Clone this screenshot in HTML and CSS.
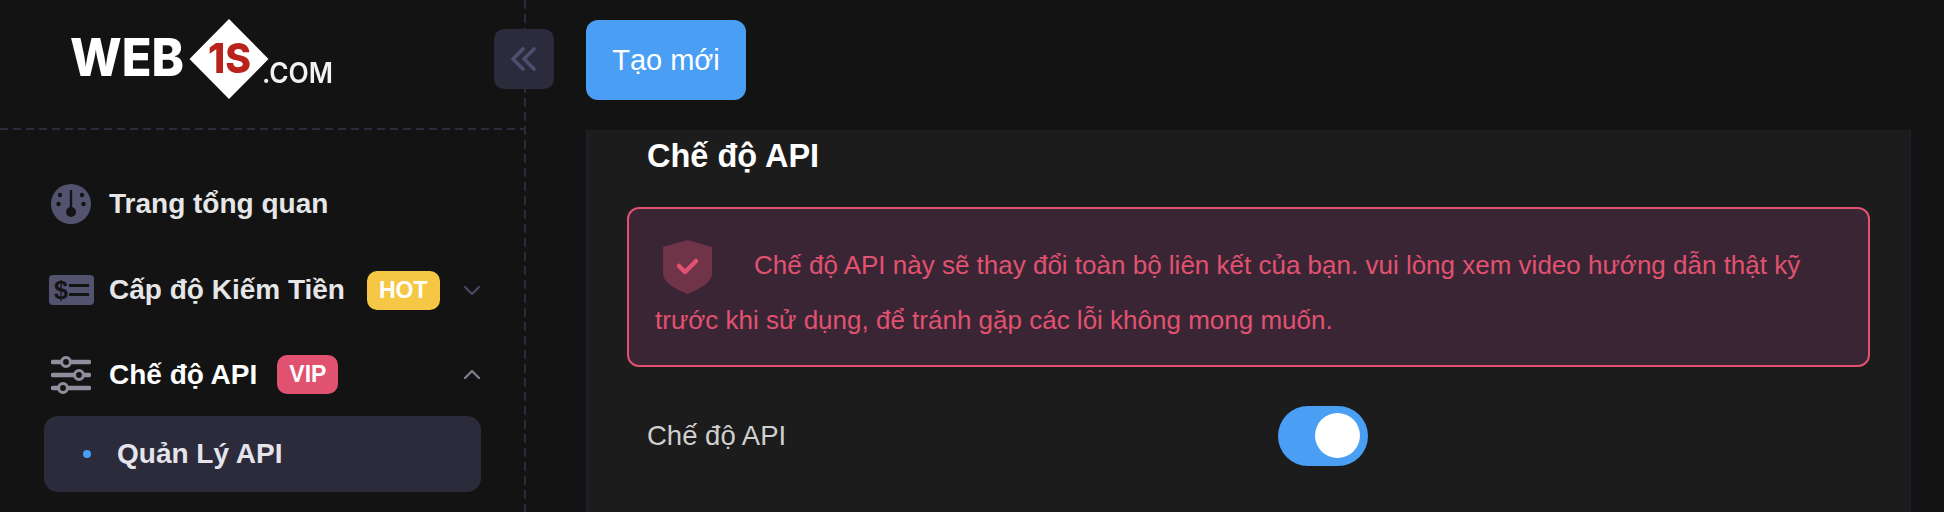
FILE: index.html
```html
<!DOCTYPE html>
<html lang="vi">
<head>
  <meta charset="UTF-8" />
  <title>Chế độ API | Web1s</title>
  <link rel="stylesheet" href="styles.css">
</head>
<body>
  <aside class="sidebar">
    <div class="logo-row">
      <svg class="logo" width="270" height="84" viewBox="0 0 270 84">
        <text class="logo-web" x="0" y="57" textLength="114" lengthAdjust="spacingAndGlyphs">WEB</text>
        <polygon points="159,0 198.5,40 159,80 119.5,40" fill="#fff" />
        <text class="logo-num" x="138" y="54" textLength="43" lengthAdjust="spacingAndGlyphs">1S</text>
        <text class="logo-com" x="192" y="64" textLength="71" lengthAdjust="spacingAndGlyphs">.COM</text>
      </svg>
      <button class="collapse">
        <svg width="28" height="24" viewBox="0 0 28 24" fill="none" stroke="#4e4e70" stroke-width="3.6" stroke-linecap="round" stroke-linejoin="round">
          <path d="M13 2 3 12l10 10" />
          <path d="M24 2 14 12l10 10" />
        </svg>
      </button>
    </div>

    <nav class="menu">
      <a class="menu-item">
        <span class="menu-icon">
          <svg width="40" height="40" viewBox="0 0 40 40">
            <circle cx="20" cy="20" r="20" fill="#54536f" />
            <rect x="18.8" y="6" width="2.4" height="19" fill="#141414" />
            <circle cx="20" cy="28" r="5" fill="#141414" />
            <circle cx="9" cy="11" r="2.2" fill="#141414" />
            <circle cx="31" cy="11" r="2.2" fill="#141414" />
            <circle cx="7.5" cy="20" r="2.2" fill="#141414" />
            <circle cx="32.5" cy="20" r="2.2" fill="#141414" />
          </svg>
        </span>
        <span class="menu-label">Trang tổng quan</span>
      </a>
      <a class="menu-item">
        <span class="menu-icon">
          <svg width="45" height="30" viewBox="0 0 45 30">
            <rect width="45" height="30" rx="4" fill="#54536f" />
            <text class="money-sign" x="5" y="24">$</text>
            <rect x="20" y="9" width="20" height="3" fill="#141414" />
            <rect x="20" y="18" width="20" height="3" fill="#141414" />
          </svg>
        </span>
        <span class="menu-label">Cấp độ Kiếm Tiền</span>
        <span class="badge badge-hot">HOT</span>
        <svg class="chevron" width="18" height="11" viewBox="0 0 18 11" fill="none" stroke="#45455f" stroke-width="2.4" stroke-linecap="round" stroke-linejoin="round"><path d="M2 2l7 7 7-7" /></svg>
      </a>
      <a class="menu-item menu-open">
        <span class="menu-icon">
          <svg width="40" height="38" viewBox="0 0 40 38" fill="none" stroke="#8f8f9d" stroke-linecap="round">
            <path d="M2 6h36M2 19h36M2 32h36" stroke-width="4.4" />
            <circle cx="15" cy="6" r="4.4" fill="#141414" stroke-width="3" />
            <circle cx="28" cy="19" r="4.4" fill="#141414" stroke-width="3" />
            <circle cx="12" cy="32" r="4.4" fill="#141414" stroke-width="3" />
          </svg>
        </span>
        <span class="menu-label">Chế độ API</span>
        <span class="badge badge-vip">VIP</span>
        <svg class="chevron" width="18" height="11" viewBox="0 0 18 11" fill="none" stroke="#7d7d8c" stroke-width="2.4" stroke-linecap="round" stroke-linejoin="round"><path d="M2 9l7-7 7 7" /></svg>
      </a>
      <a class="sub-item"><span class="sub-dot"></span>Quản Lý API</a>
    </nav>
  </aside>

  <main class="content">
    <button class="btn-primary">Tạo mới</button>
    <section class="card">
      <h3 class="card-title">Chế độ API</h3>
      <div class="alert">
        <svg class="alert-icon" width="49" height="54" viewBox="0 0 49 54">
          <path d="M24.5 0 49 7v27c0 8-12 15-24.5 20C12 49 0 42 0 34V7z" fill="#6f3448" />
          <path d="M16 26l6 6 11-11" fill="none" stroke="#e0526f" stroke-width="4.5" stroke-linecap="round" stroke-linejoin="round" />
        </svg>Chế độ API này sẽ thay đổi toàn bộ liên kết của bạn. vui lòng xem video hướng dẫn thật kỹ trước khi sử dụng, để tránh gặp các lỗi không mong muốn.
      </div>
      <div class="setting-row">
        <label class="setting-label">Chế độ API</label>
        <span class="switch"><span class="switch-knob"></span></span>
      </div>
    </section>
  </main>
</body>
</html>
```

FILE: styles.css
```css
html, body {
  height: 100%;
}
body {
  margin: 0;
  display: flex;
  overflow: hidden;
  background-color: #131314;
  font-family: 'Liberation Sans', Arial, sans-serif;
  color: #e6e6e6;
}
.sidebar {
  flex: 0 0 524px;
  background-image: repeating-linear-gradient(180deg, #2b2b3c 0 9px, transparent 9px 14px);
  background-size: 2px 100%;
  background-position: right top;
  background-repeat: no-repeat;
  padding-right: 2px;
}
.logo-row {
  position: relative;
  height: 130px;
  padding: 19px 0 0 70px;
  box-sizing: border-box;
  background-image: repeating-linear-gradient(90deg, #2b2b3c 0 8px, transparent 8px 13px);
  background-size: 100% 2px;
  background-position: left bottom;
  background-repeat: no-repeat;
}
.logo {
  display: block;
  overflow: visible;
  filter: blur(0.5px);
}
.logo-web {
  font-family: 'Inter', sans-serif;
  font-weight: 800;
  font-size: 52px;
  fill: #fff;
}
.logo-num {
  font-family: 'Inter', sans-serif;
  font-weight: 800;
  font-size: 41px;
  fill: #b9231c;
}
.logo-com {
  font-family: 'Inter', sans-serif;
  font-weight: 600;
  font-size: 28px;
  fill: #f2f2f2;
}
.collapse {
  position: absolute;
  left: 494px;
  top: 29px;
  width: 60px;
  height: 60px;
  display: flex;
  align-items: center;
  justify-content: center;
  padding: 0;
  border: none;
  border-radius: 10px;
  background-color: #2b2b3c;
}
.menu {
  padding: 31px 43px 0 44px;
}
.menu-item {
  display: flex;
  align-items: center;
  height: 86px;
  font-size: 28px;
  font-weight: bold;
  color: #e6e6e6;
}
.menu-open {
  height: 83px;
  color: #fff;
}
.menu-icon {
  display: flex;
  align-items: center;
  justify-content: center;
  width: 54px;
  margin-right: 11px;
}
.menu-icon svg {
  display: block;
}
.money-sign {
  font-family: 'Liberation Sans', sans-serif;
  font-weight: bold;
  font-size: 25px;
  fill: #141414;
}
.badge {
  margin-left: 20px;
  padding: 0 12px;
  height: 39px;
  line-height: 39px;
  border-radius: 10px;
  color: #fff;
  font-size: 23px;
  font-weight: bold;
}
.badge-hot {
  margin-left: 22px;
  background-color: #f5c744;
}
.badge-vip {
  background-color: #e0526f;
}
.chevron {
  margin-left: auto;
  margin-right: 0;
}
.sub-item {
  display: flex;
  align-items: center;
  height: 76px;
  padding-left: 39px;
  border-radius: 14px;
  background-color: #2b2b3c;
  font-size: 28px;
  font-weight: bold;
  color: #e4e4ea;
}
.sub-dot {
  width: 8px;
  height: 8px;
  margin-right: 26px;
  border-radius: 50%;
  background-color: #4a9ff5;
}
.content {
  flex: 1;
  padding: 20px 33px 0 60px;
  min-width: 0;
}
.btn-primary {
  display: block;
  width: 160px;
  height: 80px;
  margin-bottom: 30px;
  padding: 0;
  border: none;
  border-radius: 12px;
  background-color: #4a9ff5;
  color: #fff;
  font-family: inherit;
  font-size: 29px;
}
.card {
  height: 400px;
  padding: 0 39px 0 39px;
  background-color: #1c1c1c;
  border-left: 2px solid #1e1e2d;
  border-right: 2px solid #1e1e2d;
}
.card-title {
  margin: 0 0 0 20px;
  padding-top: 8px;
  height: 77px;
  box-sizing: border-box;
  font-size: 32.5px;
  line-height: 36px;
  font-weight: bold;
  color: #fff;
}
.alert {
  height: 160px;
  box-sizing: border-box;
  padding: 30px 26px 0;
  border: 2px solid #e0526f;
  border-radius: 12px;
  background-color: #3a2535;
  color: #e0526f;
  font-size: 26px;
  line-height: 53px;
}
.alert-icon {
  vertical-align: -20px;
  margin: 0 42px 0 8px;
}
.setting-row {
  display: flex;
  align-items: center;
  margin-top: 39px;
  padding-left: 20px;
}
.setting-label {
  width: 631px;
  font-size: 27.5px;
  color: #cfcfcf;
}
.switch {
  position: relative;
  display: block;
  width: 90px;
  height: 60px;
  border-radius: 30px;
  background-color: #4a9ff5;
}
.switch-knob {
  position: absolute;
  top: 7px;
  right: 8px;
  width: 45px;
  height: 45px;
  border-radius: 50%;
  background-color: #fff;
}
```
